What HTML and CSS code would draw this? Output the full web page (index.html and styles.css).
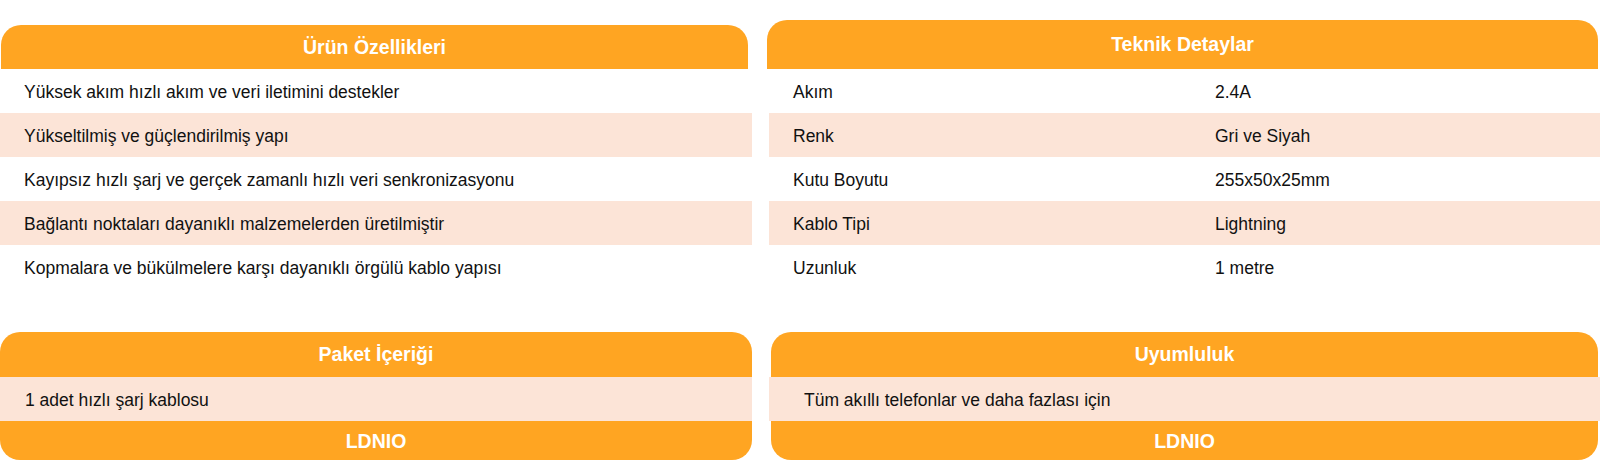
FILE: index.html
```html
<!DOCTYPE html>
<html lang="tr">
<head>
<meta charset="utf-8">
<title>Ürün Bilgileri</title>
<link rel="stylesheet" href="styles.css">
</head>
<body>
<div class="page">
  <div class="top">
    <section class="card features">
      <div class="card-head">Ürün Özellikleri</div>
      <div class="row">Yüksek akım hızlı akım ve veri iletimini destekler</div>
      <div class="row alt">Yükseltilmiş ve güçlendirilmiş yapı</div>
      <div class="row">Kayıpsız hızlı şarj ve gerçek zamanlı hızlı veri senkronizasyonu</div>
      <div class="row alt">Bağlantı noktaları dayanıklı malzemelerden üretilmiştir</div>
      <div class="row">Kopmalara ve bükülmelere karşı dayanıklı örgülü kablo yapısı</div>
    </section>
    <section class="card specs">
      <div class="card-head">Teknik Detaylar</div>
      <div class="spec-row"><span class="spec-key">Akım</span><span class="spec-val">2.4A</span></div>
      <div class="spec-row alt"><span class="spec-key">Renk</span><span class="spec-val">Gri ve Siyah</span></div>
      <div class="spec-row"><span class="spec-key">Kutu Boyutu</span><span class="spec-val">255x50x25mm</span></div>
      <div class="spec-row alt"><span class="spec-key">Kablo Tipi</span><span class="spec-val">Lightning</span></div>
      <div class="spec-row"><span class="spec-key">Uzunluk</span><span class="spec-val">1 metre</span></div>
    </section>
  </div>
  <div class="bottom">
    <section class="box package">
      <div class="box-head">Paket İçeriği</div>
      <div class="box-row">1 adet hızlı şarj kablosu</div>
      <div class="box-foot">LDNIO</div>
    </section>
    <section class="box compat">
      <div class="box-head">Uyumluluk</div>
      <div class="box-row">Tüm akıllı telefonlar ve daha fazlası için</div>
      <div class="box-foot">LDNIO</div>
    </section>
  </div>
</div>
</body>
</html>
```

FILE: styles.css
```css
* { box-sizing: border-box; }

html, body {
  margin: 0;
  padding: 0;
  background: #ffffff;
}

body {
  font-family: "Liberation Sans", Arial, sans-serif;
  color: #111111;
  width: 1600px;
  height: 465px;
  overflow: hidden;
}

.page {
  display: flex;
  flex-direction: column;
}

.top {
  display: flex;
  align-items: flex-end;
  gap: 15px;
  height: 289px;
}

.card {
  display: flex;
  flex-direction: column;
}

.features { width: 752px; }
.specs { width: 833px; }

.card-head {
  background: #ffa522;
  color: #ffffff;
  font-weight: bold;
  font-size: 19.5px;
  display: flex;
  align-items: center;
  justify-content: center;
  border-radius: 20px 20px 0 0;
}

.features .card-head {
  height: 44px;
  margin: 0 4px 0 1px;
}

.specs .card-head {
  height: 49px;
  margin-right: 2px;
}

.row,
.spec-row {
  height: 44px;
  display: flex;
  align-items: center;
  font-size: 17.5px;
  padding-top: 3px;
}

.row { padding-left: 24px; }

.spec-row { margin-left: 2px; }

.alt { background: #fce4d7; }

.spec-key {
  width: 446px;
  padding-left: 24px;
}

.spec-val { flex: 1; }

.bottom {
  display: flex;
  gap: 17px;
  margin-top: 43px;
}

.box {
  background: #ffa522;
  border-radius: 20px;
  display: flex;
  flex-direction: column;
}

.package { width: 752px; }

.compat {
  width: 827px;
  margin-left: 2px;
}

.box-head {
  height: 45px;
  color: #ffffff;
  font-weight: bold;
  font-size: 19.5px;
  display: flex;
  align-items: center;
  justify-content: center;
}

.box-row {
  height: 44px;
  background: #fce4d7;
  display: flex;
  align-items: center;
  font-size: 17.5px;
  padding-top: 2px;
}

.package .box-row { padding-left: 25px; }

.compat .box-row {
  margin: 0 -2px;
  padding-left: 35px;
}

.box-foot {
  height: 39px;
  color: #ffffff;
  font-weight: bold;
  font-size: 19.5px;
  display: flex;
  align-items: center;
  justify-content: center;
  padding-top: 2px;
}
```
